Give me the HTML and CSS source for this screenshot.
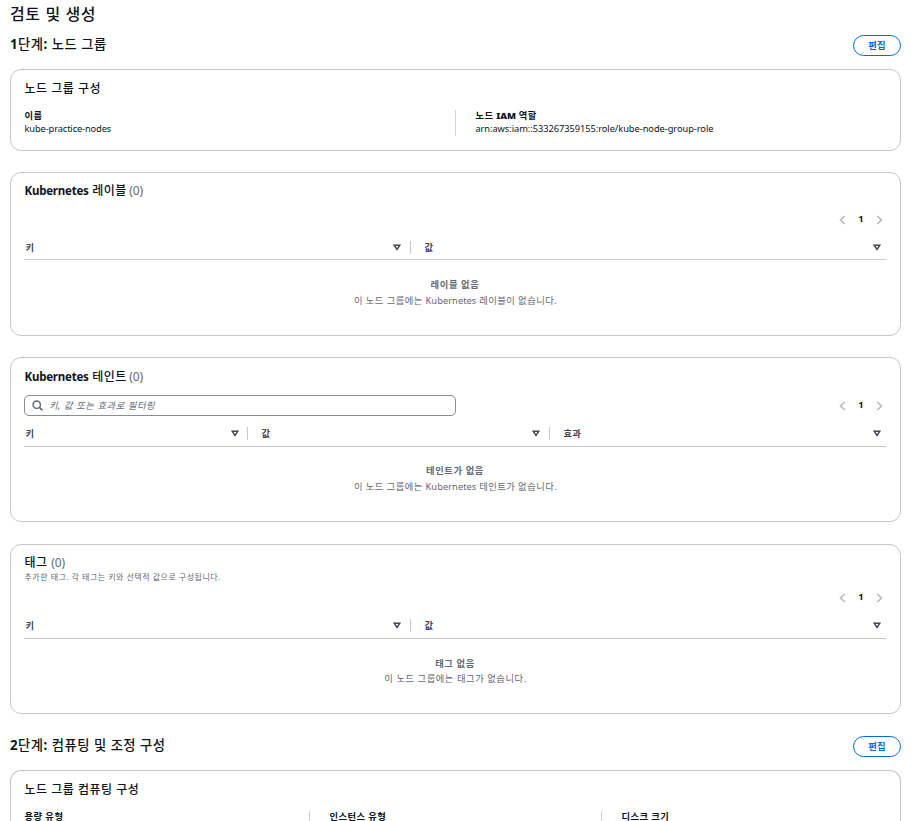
FILE: index.html
```html
<!DOCTYPE html>
<html lang="ko">
<head>
<meta charset="utf-8">
<title>검토 및 생성</title>
<link rel="stylesheet" href="styles.css">
</head>
<body>
<svg width="0" height="0" class="defs">
  <symbol id="sort" viewBox="0 0 8 7"><path d="M1.2 1.2h5.6L4 5.4z" fill="none" stroke="#424650" stroke-width="1.4"/></symbol>
  <symbol id="prev" viewBox="0 0 7 10"><path d="M5.8 1 1.5 5l4.3 4" fill="none" stroke="#b4b4bb" stroke-width="1.5"/></symbol>
  <symbol id="next" viewBox="0 0 7 10"><path d="m1.2 1 4.3 4-4.3 4" fill="none" stroke="#b4b4bb" stroke-width="1.5"/></symbol>
</svg>
<main class="page">
  <h1>검토 및 생성</h1>
  <div class="step">
    <h2><b>1</b>단계<b>:</b> 노드 그룹</h2>
    <button class="edit">편집</button>
  </div>

  <section class="card card-config">
    <h3>노드 그룹 구성</h3>
    <div class="columns two">
      <div class="field"><div class="label">이름</div><div class="value name">kube-practice-nodes</div></div>
      <div class="field"><div class="label">노드 <b class="iam">IAM</b> 역할</div><div class="value">arn:aws:iam::533267359155:role/kube-node-group-role</div></div>
    </div>
  </section>

  <section class="card card-labels">
    <h3><b class="latin">Kubernetes</b> 레이블 <span class="count">(0)</span></h3>
    <div class="tools"><div class="pager"><svg><use href="#prev"/></svg><b>1</b><svg><use href="#next"/></svg></div></div>
    <div class="thead half">
      <div class="th">키<svg><use href="#sort"/></svg></div>
      <div class="th">값<svg><use href="#sort"/></svg></div>
    </div>
    <div class="empty"><strong>레이블 없음</strong><p>이 노드 그룹에는 <span class="latin-text">Kubernetes</span> 레이블이 없습니다.</p></div>
  </section>

  <section class="card card-taints">
    <h3><b class="latin">Kubernetes</b> 테인트 <span class="count">(0)</span></h3>
    <div class="tools">
      <div class="search">
        <svg viewBox="0 0 11 11"><circle cx="4.7" cy="4.7" r="3.7" fill="none" stroke="#5f6570" stroke-width="1.4"/><path d="m7.4 7.4 3 3" stroke="#5f6570" stroke-width="1.5"/></svg>
        <span>키, 값 또는 효과로 필터링</span>
      </div>
      <div class="pager"><svg><use href="#prev"/></svg><b>1</b><svg><use href="#next"/></svg></div>
    </div>
    <div class="thead third">
      <div class="th">키<svg><use href="#sort"/></svg></div>
      <div class="th">값<svg><use href="#sort"/></svg></div>
      <div class="th">효과<svg><use href="#sort"/></svg></div>
    </div>
    <div class="empty"><strong>테인트가 없음</strong><p>이 노드 그룹에는 <span class="latin-text">Kubernetes</span> 테인트가 없습니다.</p></div>
  </section>

  <section class="card card-tags">
    <h3>태그 <span class="count">(0)</span></h3>
    <p class="desc">추가한 태그. 각 태그는 키와 선택적 값으로 구성됩니다.</p>
    <div class="tools"><div class="pager"><svg><use href="#prev"/></svg><b>1</b><svg><use href="#next"/></svg></div></div>
    <div class="thead half">
      <div class="th">키<svg><use href="#sort"/></svg></div>
      <div class="th">값<svg><use href="#sort"/></svg></div>
    </div>
    <div class="empty"><strong>태그 없음</strong><p>이 노드 그룹에는 태그가 없습니다.</p></div>
  </section>

  <div class="step step-2">
    <h2><b>2</b>단계<b>:</b> 컴퓨팅 및 조정 구성</h2>
    <button class="edit">편집</button>
  </div>

  <section class="card card-compute">
    <h3>노드 그룹 컴퓨팅 구성</h3>
    <div class="columns three">
      <div class="field"><div class="label">용량 유형</div></div>
      <div class="field"><div class="label">인스턴스 유형</div></div>
      <div class="field"><div class="label">디스크 크기</div></div>
    </div>
  </section>
</main>
</body>
</html>
```
FILE: styles.css
```css
* { box-sizing: border-box; margin: 0; padding: 0; }
html, body { height: 821px; overflow: hidden; }
body { background: #fff; color: #0f141a; font-family: "Noto Sans", "Noto Sans CJK KR", sans-serif; font-size: 9.3px; white-space: nowrap; }
.defs { position: absolute; }
svg { display: block; flex: none; }
.page { padding: 4px 14px 0 10px; }
h1 { height: 20px; line-height: 20px; font-size: 16px; font-weight: 500; letter-spacing: .6px; }
.step { display: flex; justify-content: space-between; height: 45px; padding-top: 11px; }
h2 { height: 20px; line-height: 20px; font-size: 13.3px; font-weight: 500; letter-spacing: .5px; margin-top: -1px; }
.edit { width: 48px; height: 21px; border: 1px solid #006ce0; border-radius: 11px; background: #fff; color: #006ce0; font: 700 9.3px/17px "Noto Sans", "Noto Sans CJK KR", sans-serif; letter-spacing: .3px; padding-bottom: 1px; }
.card { border: 1px solid #c6c6cd; border-radius: 11px; padding: 9px 14px 0 13px; display: flex; flex-direction: column; }
h3 { height: 18px; line-height: 18px; font-size: 12px; font-weight: 500; letter-spacing: .5px; padding-left: .5px; }
.latin { font-size: 11.5px; font-weight: 700; letter-spacing: -.22px; }
.latin-text { letter-spacing: .05px; }
.count { font-weight: 400; color: #656871; letter-spacing: -.1px; margin-left: -1.2px; }
.card-tags .count { margin-left: 0; }
.card-config { height: 82px; padding-top: 10px; }
.card-labels { height: 164px; margin-top: 21px; }
.card-taints { height: 165px; margin-top: 21px; padding-top: 10px; }
.card-tags { height: 170px; margin-top: 22px; }
.card-compute { height: 51px; border-bottom: 0; border-radius: 11px 11px 0 0; padding-top: 10px; }

.columns { display: grid; margin-top: 12px; padding-left: .5px; }
.two { grid-template-columns: 430.5px 1fr; }
.three { grid-template-columns: 284.5px 292px 1fr; height: 10px; }
.field { height: 26px; }
.three .field { height: 10px; }
.field + .field { border-left: 1px solid #d2d2d8; padding-left: 19.4px; }
.label { height: 12px; line-height: 12px; font-weight: 700; letter-spacing: .45px; }
.three .label { height: 10px; }
.iam { letter-spacing: -.1px; }
.value { height: 13px; line-height: 13px; letter-spacing: -.06px; }
.name { letter-spacing: -.12px; }

.tools { height: 21px; margin-top: 9px; display: flex; align-items: center; }
.pager { margin-left: auto; margin-right: 3px; display: flex; align-items: center; justify-content: space-between; width: 44px; height: 21px; }
.pager svg { width: 7px; height: 10px; }
.pager b { line-height: 17px; height: 19px; }
.search { width: 432px; height: 21px; border: 1px solid #8c8c94; border-radius: 5px; display: flex; align-items: center; padding-left: 7px; gap: 6px; color: #656871; font-style: italic; letter-spacing: .57px; }
.search svg { width: 11px; height: 11px; }
.search span { line-height: 19px; }

.thead { display: grid; height: 30px; border-bottom: 1px solid #c6c6cd; padding-top: 11px; }
.card-taints .thead, .card-tags .thead { height: 31px; }
.half { grid-template-columns: 386px 1fr; }
.third { grid-template-columns: 223px 302px 1fr; }
.th { display: flex; align-items: center; justify-content: space-between; height: 13px; line-height: 13px; padding: 0 9px 0 1.5px; color: #424650; font-weight: 700; letter-spacing: .3px; }
.third .th:first-child { padding-right: 8px; }
.th + .th { border-left: 1px solid #c6c6cd; padding: 0 5px 0 13.5px; }
.third .th:nth-child(2) { padding-right: 9px; }
.th svg { width: 8px; height: 7px; }
.empty { text-align: center; color: #656871; padding-top: 17px; letter-spacing: .6px; }
.card-taints .empty { padding-top: 16px; }
.empty strong { display: block; height: 16px; line-height: 16px; font-weight: 700; }
.empty p { height: 16px; line-height: 16px; letter-spacing: .45px; padding-left: 1px; }
.card-tags .empty p { letter-spacing: .55px; }
.card-tags .empty strong { height: 15px; }
.desc { height: 11px; line-height: 9px; font-size: 8px; letter-spacing: .5px; color: #656871; padding-left: .5px; }
.card-tags .tools { margin-top: 4px; }
.step-2 { height: 56px; padding-top: 22px; }
```
